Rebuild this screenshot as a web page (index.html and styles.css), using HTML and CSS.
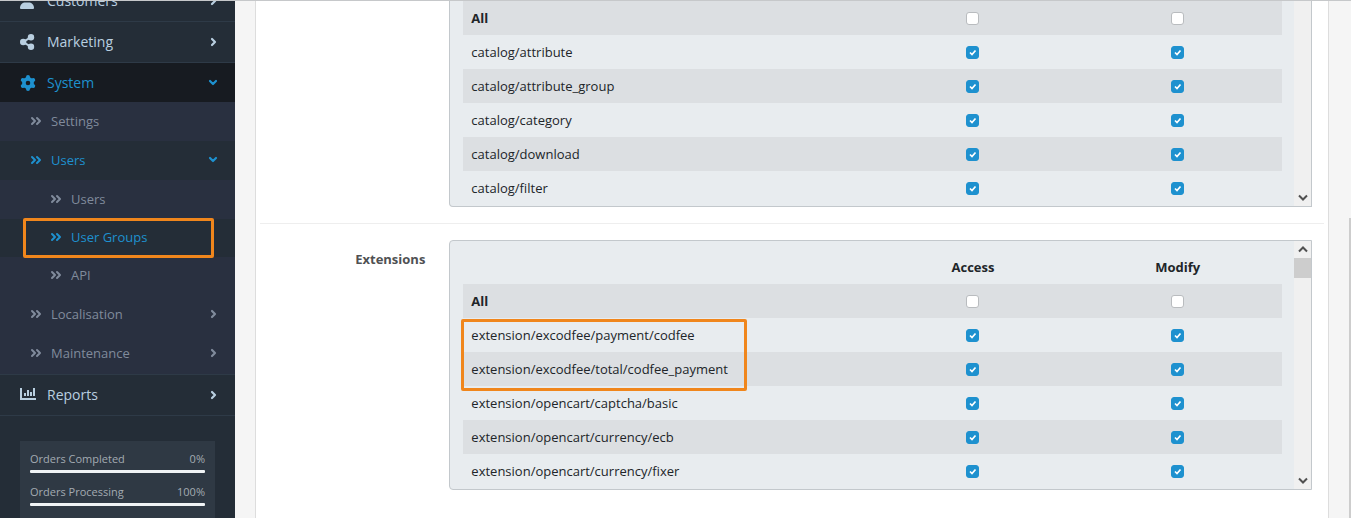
FILE: index.html
```
<!DOCTYPE html>
<html lang="en">

<head>
  <meta charset="utf-8">
  <title>User Groups</title>
  <link rel="stylesheet" href="styles.css">
</head>

<body>
  <svg class="sprite" aria-hidden="true">
    <symbol id="right" viewBox="0 0 12 12"><path d="M5 3l3 3-3 3" /></symbol>
    <symbol id="down" viewBox="0 0 12 12"><path d="M3 4l3 3 3-3" /></symbol>
    <symbol id="double" viewBox="0 0 12 12"><path d="M2 3l3 3-3 3M7 3l3 3-3 3" /></symbol>
    <symbol id="scroll-down" viewBox="0 0 12 10"><path d="M2 3l4 4 4-4" /></symbol>
    <symbol id="scroll-up" viewBox="0 0 12 10"><path d="M2 7l4-4 4 4" /></symbol>
  </svg>

  <div class="page">
    <nav class="sidebar">
      <ul class="menu">
        <li class="cut">
          <a href="#" class="item">
            <svg class="icon" viewBox="0 0 16 16"><circle cx="7" cy="4" r="4" /><path d="M0 15c0-3.500 2.500-5.500 5.500-5.500h3c3 0 5.500 2 5.500 5.500q0 1-1 1H1q-1 0-1-1z" /></svg>
            <span>Customers</span>
            <svg class="arrow"><use href="#right" /></svg>
          </a>
        </li>
        <li>
          <a href="#" class="item">
            <svg class="icon" viewBox="0 0 16 16"><circle cx="11" cy="3.200" r="3.200" /><circle cx="3.200" cy="8" r="3.200" /><circle cx="11" cy="12.800" r="3.200" /><path class="line" d="M11 3.200L3.200 8l7.800 4.800" /></svg>
            <span>Marketing</span>
            <svg class="arrow"><use href="#right" /></svg>
          </a>
        </li>
        <li>
          <a href="#" class="item open">
            <svg class="icon" viewBox="0 0 16 16"><path class="teeth" d="M8 2v2.500M8 11.500v2.500M2.800 5l2.200 1.250M11 9.750l2.200 1.250M2.800 11l2.200-1.250M11 6.250l2.200-1.250" /><circle class="ring" cx="8" cy="8" r="4.100" /></svg>
            <span>System</span>
            <svg class="arrow"><use href="#down" /></svg>
          </a>
          <ul class="submenu">
            <li><a href="#" class="sub"><svg class="double"><use href="#double" /></svg><span>Settings</span></a></li>
            <li>
              <a href="#" class="sub active"><svg class="double"><use href="#double" /></svg><span>Users</span><svg class="arrow"><use href="#down" /></svg></a>
              <ul class="third">
                <li><a href="#" class="sub"><svg class="double"><use href="#double" /></svg><span>Users</span></a></li>
                <li class="marked"><a href="#" class="sub active"><svg class="double"><use href="#double" /></svg><span>User Groups</span></a></li>
                <li><a href="#" class="sub"><svg class="double"><use href="#double" /></svg><span>API</span></a></li>
              </ul>
            </li>
            <li><a href="#" class="sub"><svg class="double"><use href="#double" /></svg><span>Localisation</span><svg class="arrow"><use href="#right" /></svg></a></li>
            <li><a href="#" class="sub"><svg class="double"><use href="#double" /></svg><span>Maintenance</span><svg class="arrow"><use href="#right" /></svg></a></li>
          </ul>
        </li>
        <li class="last">
          <a href="#" class="item">
            <svg class="icon" viewBox="0 0 16 16"><path d="M0 1h2v10h14v2H0zM4 6h2v3H4zM7 3h2v6H7zM10 5h2v4h-2zM13 1h2v8h-2z" /></svg>
            <span>Reports</span>
            <svg class="arrow"><use href="#right" /></svg>
          </a>
        </li>
      </ul>
      <div class="stats">
        <div class="stat"><span>Orders Completed</span><span>0%</span></div>
        <div class="bar"></div>
        <div class="stat"><span>Orders Processing</span><span>100%</span></div>
        <div class="bar"></div>
      </div>
    </nav>

    <main class="content">
      <div class="card">
        <div class="row first">
          <div class="label"></div>
          <div class="field">
            <div class="well">
              <table>
                <colgroup><col><col class="access"><col class="modify"></colgroup>
                <tbody>
                  <tr><th scope="row">All</th><td><input type="checkbox" aria-label="Access all"></td><td><input type="checkbox" aria-label="Modify all"></td></tr>
                  <tr><td>catalog/attribute</td><td><input type="checkbox" aria-label="Access catalog/attribute" checked></td><td><input type="checkbox" aria-label="Modify catalog/attribute" checked></td></tr>
                  <tr><td>catalog/attribute_group</td><td><input type="checkbox" aria-label="Access catalog/attribute_group" checked></td><td><input type="checkbox" aria-label="Modify catalog/attribute_group" checked></td></tr>
                  <tr><td>catalog/category</td><td><input type="checkbox" aria-label="Access catalog/category" checked></td><td><input type="checkbox" aria-label="Modify catalog/category" checked></td></tr>
                  <tr><td>catalog/download</td><td><input type="checkbox" aria-label="Access catalog/download" checked></td><td><input type="checkbox" aria-label="Modify catalog/download" checked></td></tr>
                  <tr><td>catalog/filter</td><td><input type="checkbox" aria-label="Access catalog/filter" checked></td><td><input type="checkbox" aria-label="Modify catalog/filter" checked></td></tr>
                </tbody>
              </table>
              <div class="track">
                <svg class="scroll-arrow end"><use href="#scroll-down" /></svg>
              </div>
            </div>
          </div>
        </div>

        <div class="row">
          <div class="label">Extensions</div>
          <div class="field">
            <div class="well">
              <table>
                <colgroup><col><col class="access"><col class="modify"></colgroup>
                <thead>
                  <tr><td></td><th scope="col">Access</th><th scope="col">Modify</th></tr>
                </thead>
                <tbody>
                  <tr><th scope="row">All</th><td><input type="checkbox" aria-label="Access all extensions"></td><td><input type="checkbox" aria-label="Modify all extensions"></td></tr>
                  <tr><td class="noted">extension/excodfee/payment/codfee</td><td><input type="checkbox" aria-label="Access codfee" checked></td><td><input type="checkbox" aria-label="Modify codfee" checked></td></tr>
                  <tr><td>extension/excodfee/total/codfee_payment</td><td><input type="checkbox" aria-label="Access codfee_payment" checked></td><td><input type="checkbox" aria-label="Modify codfee_payment" checked></td></tr>
                  <tr><td>extension/opencart/captcha/basic</td><td><input type="checkbox" aria-label="Access basic" checked></td><td><input type="checkbox" aria-label="Modify basic" checked></td></tr>
                  <tr><td>extension/opencart/currency/ecb</td><td><input type="checkbox" aria-label="Access ecb" checked></td><td><input type="checkbox" aria-label="Modify ecb" checked></td></tr>
                  <tr><td>extension/opencart/currency/fixer</td><td><input type="checkbox" aria-label="Access fixer" checked></td><td><input type="checkbox" aria-label="Modify fixer" checked></td></tr>
                </tbody>
              </table>
              <div class="track">
                <svg class="scroll-arrow"><use href="#scroll-up" /></svg>
                <div class="thumb"></div>
                <svg class="scroll-arrow end"><use href="#scroll-down" /></svg>
              </div>
            </div>
          </div>
        </div>
      </div>
    </main>
    <div class="page-scroll"></div>
  </div>
</body>

</html>
```
FILE: styles.css
```
*,
*::after {
  box-sizing: border-box;
}

body {
  margin: 0;
  font-family: "Open Sans", sans-serif;
  font-size: 13px;
  line-height: 20px;
  color: #212529;
  background-color: #f5f5f5;
  overflow: hidden;
}

ul {
  list-style: none;
  margin: 0;
  padding: 0;
}

a {
  text-decoration: none;
}

.sprite {
  display: none;
}

.page {
  display: flex;
  height: 100vh;
  border-top: 1px solid #c6c8ca;
  overflow: hidden;
}

/* sidebar */
.sidebar {
  flex: 0 0 235px;
  background-color: #242d37;
}

.menu > li {
  border-top: 1px solid #2e3a47;
}

.menu > .cut {
  margin-top: -21px;
}

.menu > .last {
  border-bottom: 1px solid #2e3a47;
}

.item {
  display: flex;
  align-items: center;
  height: 40px;
  padding: 0 16px 0 20px;
  font-size: 14px;
  color: #b9cfe0;
}

.item span,
.sub span {
  flex: 1;
}

.icon {
  width: 16px;
  height: 16px;
  margin-right: 11px;
  fill: currentColor;
}

.icon .line {
  fill: none;
  stroke: currentColor;
  stroke-width: 2;
}

.icon .teeth {
  stroke: currentColor;
  stroke-width: 4;
  stroke-linecap: round;
}

.icon .ring {
  fill: #171b21;
  stroke: currentColor;
  stroke-width: 3.600;
}

.open {
  height: 39px;
  color: #1e91cf;
  background-color: #171b21;
}

.arrow,
.double {
  width: 12px;
  height: 12px;
  fill: none;
  stroke: currentColor;
  stroke-width: 2.200;
  stroke-linecap: round;
  stroke-linejoin: round;
}

.submenu {
  padding-bottom: 1px;
  background-color: #293040;
}

.third {
  padding-top: 1px;
}

.sub {
  display: flex;
  align-items: center;
  height: 39px;
  padding: 0 16px 2px 30px;
  color: #808b9c;
}

.third .sub {
  height: 38px;
  padding-left: 50px;
}

.sub.active {
  color: #1e91cf;
  background-color: #242d37;
}

.double {
  stroke-width: 2;
  margin-right: 9px;
}

.marked {
  position: relative;
}

.marked::after {
  content: "";
  position: absolute;
  top: -1px;
  left: 23px;
  right: 21px;
  height: 40px;
  border: 3px solid #f0861c;
  border-radius: 2px;
}

.stats {
  margin: 25px 20px 0;
  padding: 8px 10px 20px;
  background-color: #2f3944;
  font-size: 11px;
  color: #a3abb2;
}

.stat {
  display: flex;
  justify-content: space-between;
}

.bar {
  height: 3px;
  margin: 1px 0 9px;
  border-radius: 1px;
  background-color: #f0f3f5;
}

/* content */
.content {
  flex: 1;
  padding: 0 20px;
}

.card {
  height: 100%;
  padding: 0 4px;
  border: 1px solid #ddd;
  border-width: 0 1px;
  background-color: #fff;
}

.row {
  display: flex;
  padding: 16px 0;
}

.row.first {
  padding-top: 0;
  border-bottom: 1px solid #eee;
}

.label {
  width: 16.67%;
  padding: 9px 12px;
  text-align: right;
  font-weight: bold;
  color: #4f5153;
}

.field {
  flex: 1;
  padding: 0 12px;
}

.well {
  display: flex;
  height: 250px;
  padding-left: 13px;
  border: 1px solid #c3c8cc;
  border-radius: 4px 0 0 4px;
  background-color: #e8ecef;
}

.first .well {
  height: auto;
  border-top: 0;
  border-radius: 0 0 0 4px;
}

table {
  flex: 1;
  align-self: flex-start;
  margin: 9px 12px 0 0;
  border-collapse: collapse;
  table-layout: fixed;
}

.first table {
  margin: 0 12px 1px 0;
}

.access {
  width: 24.500%;
}

.modify {
  width: 25.500%;
}

td,
th {
  height: 34px;
  padding: 0 8px;
  text-align: center;
}

tbody tr > :first-child {
  text-align: left;
}

tbody tr:nth-child(odd) {
  background-color: #dcdfe2;
}

.noted {
  position: relative;
}

.noted::after {
  content: "";
  position: absolute;
  top: 1px;
  left: -2px;
  width: 286px;
  height: 72px;
  border: 3px solid #f0861c;
  border-radius: 2px;
}

input[type="checkbox"] {
  appearance: none;
  display: block;
  width: 13px;
  height: 13px;
  margin: 0 auto;
  border: 1px solid #b9bcbf;
  border-radius: 3px;
  background-color: #fff;
}

input[type="checkbox"]:checked {
  border-color: #1e91cf;
  background: #1e91cf url("data:image/svg+xml,%3Csvg xmlns='http://www.w3.org/2000/svg' viewBox='0 0 11 11'%3E%3Cpath d='M3 5.500l2 2 3.500-4' fill='none' stroke='white' stroke-width='1.700'/%3E%3C/svg%3E") center no-repeat;
}

.track {
  display: flex;
  flex-direction: column;
  align-items: center;
  width: 17px;
  background-color: #f0f0f0;
}

.thumb {
  width: 100%;
  height: 20px;
  background-color: #cdcdcd;
}

.scroll-arrow {
  width: 12px;
  height: 17px;
  fill: none;
  stroke: #505050;
  stroke-width: 2;
}

.scroll-arrow.end {
  margin-top: auto;
}

.page-scroll {
  width: 2px;
  margin-top: 217px;
  background-color: #cdcdcd;
}
```
